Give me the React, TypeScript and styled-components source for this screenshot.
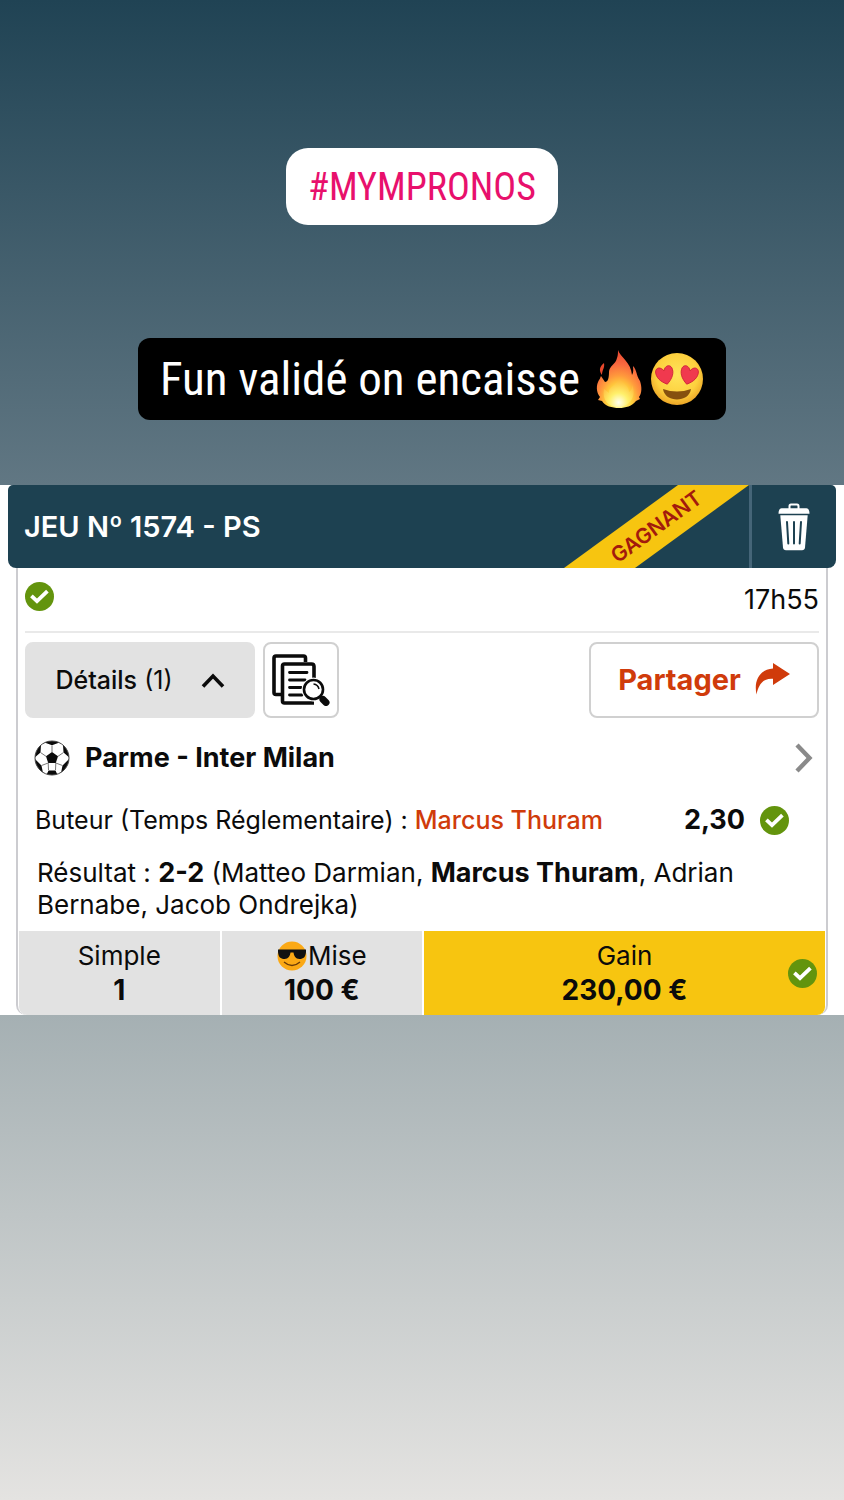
import React from "react";
import styled, { createGlobalStyle } from "styled-components";

const GlobalStyle = createGlobalStyle`
  * { box-sizing: border-box; }
  body { margin: 0; font-family: Inter, "Liberation Sans", sans-serif; color: #0b0b0b; }
  button { font: inherit; color: inherit; border: 0; padding: 0; background: none; cursor: pointer; }
  h1, h2, p, dl, dt, dd { margin: 0; font: inherit; }
  svg { display: block; flex: none; }
`;

const Story = styled.main`
  min-height: 100vh;
  background: linear-gradient(#204354, #617783 485px, #a5b0b3 1015px, #e4e3e1);
`;

const Stickers = styled.header`
  display: flex;
  flex-direction: column;
  align-items: center;
  padding: 148px 0 65px;
`;

const condensed = `"Roboto Condensed", "Liberation Sans Narrow", "DejaVu Sans Condensed", sans-serif`;

const Hashtag = styled.a`
  display: flex;
  align-items: center;
  height: 77px;
  padding: 0 22px;
  border-radius: 22px;
  background: #fff;
  color: #e8106c;
  font: 38px/48px ${condensed};
  text-decoration: none;
`;

const Caption = styled.p`
  display: flex;
  align-items: center;
  height: 82px;
  padding: 0 22px;
  border-radius: 12px;
  background: #000;
  color: #fff;
  && {
    margin: 113px 0 0 20px;
    font: 47px/60px ${condensed};
  }
`;

const Emojis = styled.span`
  display: flex;
  align-items: center;
  gap: 8px;
  margin-left: 16px;
`;

const Ticket = styled.article`
  background: #fff;
`;

const TicketHeader = styled.header`
  display: flex;
  align-items: center;
  height: 83px;
  margin: 0 8px;
  border-radius: 5px 5px 8px 8px;
  overflow: hidden;
  background: #1d4151;
  color: #fff;
`;

const TicketTitle = styled.h1`
  flex: 1;
  && { padding-left: 16px; font-size: 29px; line-height: 34px; font-weight: 600; }
`;

const Ribbon = styled.div`
  display: flex;
  align-items: center;
  justify-content: center;
  width: 185px;
  height: 83px;
  background: #f7c510;
  clip-path: polygon(114px 0, 100% 0, 71px 100%, 0 100%);
  color: #a31a0c;
  font-size: 21px;
  font-weight: 600;
`;

const RibbonText = styled.span`
  transform: rotate(-36deg);
`;

const DeleteButton = styled.button`
  display: flex;
  align-items: center;
  justify-content: center;
  width: 87px;
  height: 100%;
  && { border-left: 3px solid #456578; }
`;

const TicketBody = styled.div`
  margin: 0 16px;
  border: 2px solid #ccccd0;
  border-width: 0 2px;
  border-radius: 0 0 10px 10px;
  padding: 0 1px;
`;

const StatusRow = styled.div`
  display: flex;
  align-items: flex-start;
  justify-content: space-between;
  height: 65px;
  margin: 0 6px;
  padding-top: 14px;
  border-bottom: 2px solid #e9e9e9;
  font-size: 27px;
  line-height: 36px;
`;

const Actions = styled.div`
  display: flex;
  gap: 8px;
  padding: 9px 6px 0;
`;

const Action = styled.button<{ $wide?: boolean; $filled?: boolean; $accent?: boolean }>`
  display: flex;
  align-items: center;
  justify-content: center;
  gap: ${(p) => (p.$filled ? 28 : 14)}px;
  width: ${(p) => (p.$wide ? 230 : 76)}px;
  height: 76px;
  && {
    margin-left: ${(p) => (p.$accent ? "auto" : "0")};
    border: 2px solid ${(p) => (p.$filled ? "#e2e2e2" : "#d0d0d0")};
    border-radius: 8px;
    background: ${(p) => (p.$filled ? "#e2e2e2" : "#fff")};
    color: ${(p) => (p.$accent ? "#d03b0b" : "#0b0b0b")};
    font-size: ${(p) => (p.$accent ? 29 : 25)}px;
    line-height: 36px;
    font-weight: ${(p) => (p.$accent ? 700 : 400)};
  }
`;

const Strong = styled.strong<{ $weight?: number }>`
  font-weight: ${(p) => p.$weight ?? 700};
`;

const MatchRow = styled.button`
  display: flex;
  align-items: center;
  width: 100%;
  height: 80px;
  text-align: left;
  && { padding: 0 12px 0 15px; }
`;

const MatchName = styled.h2`
  flex: 1;
  && { padding-left: 15px; font-size: 27px; line-height: 32px; font-weight: 700; }
`;

const BetRow = styled.div`
  display: flex;
  align-items: center;
  height: 44px;
  padding: 0 36px 0 16px;
  font-size: 25px;
  line-height: 32px;
`;

const Player = styled.span`
  color: #d03b0b;
  font-weight: 500;
`;

const Odds = styled.strong`
  margin: 0 15px 0 auto;
  font-size: 27px;
  font-weight: 700;
`;

const Result = styled.p`
  && { padding: 15px 60px 10px 18px; font-size: 26px; line-height: 32px; }
  && strong { font-size: 27px; }
`;

const Totals = styled.dl`
  display: grid;
  grid-template-columns: 1fr 1fr 2fr;
  gap: 2px;
  border-radius: 0 0 8px 8px;
  overflow: hidden;
`;

const Total = styled.div<{ $win?: boolean }>`
  position: relative;
  height: 84px;
  padding-top: 8px;
  text-align: center;
  background: ${(p) => (p.$win ? "#f7c510" : "#e2e2e2")};
`;

const TotalLabel = styled.dt`
  display: flex;
  justify-content: center;
  align-items: center;
  gap: 1px;
  && { font-size: 26px; line-height: 34px; }
`;

const TotalValue = styled.dd`
  && { font-size: 28px; line-height: 34px; font-weight: 700; }
`;

const WinMark = styled.span`
  position: absolute;
  right: 8px;
  top: 28px;
`;

const Check = () => (
  <svg width="29" height="29" viewBox="0 0 29 29" role="img" aria-label="Gagné">
    <circle cx="14.5" cy="14.5" r="14.5" fill="#63940d" />
    <path d="M6.4 13.8 12 19.2 22.4 9.2" fill="none" stroke="#fff" strokeWidth="3.8" />
  </svg>
);

const Trash = () => (
  <svg width="32" height="48" viewBox="0 0 32 48" aria-hidden="true">
    <path d="M11.5 6V3.2Q11.5 1.5 13 1.5H19Q20.5 1.5 20.5 3.2V6" fill="none" stroke="#fff" strokeWidth="2" />
    <path d="M3.5 5.2H28.5Q31.5 5.5 31.5 10.8H.5Q.5 5.5 3.5 5.2Z" fill="#fff" />
    <path d="M2.3 12.3H29.7L27 44.5Q26.7 47.3 24 47.3H8Q5.3 47.3 5 44.5Z" fill="#fff" />
    <path d="M9 19 10.3 40.5M16 19V40.5M23 19 21.7 40.5" stroke="#1d4151" strokeWidth="2" strokeLinecap="round" />
  </svg>
);

const Documents = () => (
  <svg width="58" height="52" viewBox="0 0 58 52" fill="none" stroke="#0b0b0b" aria-hidden="true">
    <path d="M33.5 8V4Q33.5 2 31.5 2H4Q2 2 2 4V38.5Q2 40.5 4 40.5H9" strokeWidth="3.6" />
    <path d="M42 24V12.5Q42 10 39.5 10H12.5Q10.5 10 10.5 12V47Q10.5 49 12.5 49H42" strokeWidth="3.6" />
    <path d="M17.5 18.5H35M17.5 26H33M17.5 33.5H29M17.5 41H30" strokeWidth="2.8" strokeLinecap="round" />
    <circle cx="41.5" cy="35.5" r="11.5" fill="#fff" stroke="#fff" />
    <circle cx="41.5" cy="35.5" r="9.5" fill="#fff" strokeWidth="2.6" />
    <path d="M41.5 30Q46 30.5 47 35" strokeWidth="1.5" />
    <path d="M48.5 42.5 51 45" strokeWidth="2.6" />
    <path d="M51 45.5 54 48.5" strokeWidth="7" strokeLinecap="round" />
  </svg>
);

const ChevronUp = () => (
  <svg width="24" height="16" viewBox="0 0 24 16" aria-hidden="true">
    <path d="M2 14.5 12 4 22 14.5" fill="none" stroke="#0b0b0b" strokeWidth="3.6" />
  </svg>
);

const ChevronRight = () => (
  <svg width="18" height="30" viewBox="0 0 18 30" aria-hidden="true">
    <path d="M2 2 14.5 15 2 28" fill="none" stroke="#8a8a8a" strokeWidth="4.4" />
  </svg>
);

const ShareArrow = () => (
  <svg width="35" height="34" viewBox="0 0 35 34" aria-hidden="true">
    <path d="M18 0 35 11 18 22V15.8C9 15 4 20 1.5 31.5C-1.5 17 5 6.500 18 5.500Z" fill="#d03b0b" />
  </svg>
);

const Ball = () => (
  <svg width="36" height="36" viewBox="0 0 36 36" aria-hidden="true">
    <defs>
      <clipPath id="ball"><circle cx="18" cy="18" r="17" /></clipPath>
    </defs>
    <circle cx="18" cy="18" r="17" fill="#fff" />
    <g clipPath="url(#ball)">
      <path d="M18 12 24 16.3 21.8 23H14.2L12 16.3Z" fill="#0b0b0b" />
      <path d="M10.500 2.5 18 5.2 25.5 2.5 22-2H14ZM29 5 29.5 12.5 36 18 40 8ZM35 19 28.5 25.5 27 33 38 32ZM24 36 21.5 30.5H14.5L12 36 18 40ZM9 33 7.5 25.5 1 19-3 32ZM0 18 6.5 12.5 7 5-4 8Z" fill="#0b0b0b" />
      <path d="M18 12V5.5M24 16.3 29.5 12.5M21.8 23 28.5 25.5M21.8 23 21.5 30M14.2 23 14.5 30M14.2 23 7.5 25.5M12 16.3 6.5 12.5" stroke="#777" strokeWidth="1" fill="none" />
    </g>
    <circle cx="18" cy="18" r="17" fill="none" stroke="#444" strokeWidth="1" />
  </svg>
);

const Flame = () => (
  <svg width="46" height="58" viewBox="0 0 46 58" role="img" aria-label="feu">
    <defs>
      <radialGradient id="flame" cx=".5" cy=".88" r=".88">
        <stop offset="0" stopColor="#fffde0" />
        <stop offset=".16" stopColor="#fff27a" />
        <stop offset=".32" stopColor="#ffd23c" />
        <stop offset=".5" stopColor="#ff9a3c" />
        <stop offset=".72" stopColor="#f9693f" />
        <stop offset="1" stopColor="#e8452f" />
      </radialGradient>
      <radialGradient id="core" cx=".5" cy=".85" r=".8">
        <stop offset="0" stopColor="#fffff0" />
        <stop offset=".4" stopColor="#fff06a" />
        <stop offset="1" stopColor="#ffb03a" stopOpacity=".5" />
      </radialGradient>
    </defs>
    <path d="M22 0C24 7 35 12 36 25C38 22 37 19 37 16C41 20 40 25 44 31C46 37 46 43 43 47L44 49L40 51C36 56 30 58 23 58C16 58 9 56 6 51L2 50L4 47C0 42 0 35 3 30C4 29 4 28 5 26L9 32C12 32 13 28 13 22C13 16 20 14 21 8C22 5 22 3 22 0Z" fill="url(#flame)" />
    <path d="M8 13C3 17 3 21 6 25C6 20 9 18 8 13Z" fill="#e8482c" />
    <path d="M23 27C25 33 33 35 33 42C36 40 36 38 36 35C41 46 34 56 23 57C12 57 6 50 8 39L13 43C12 36 23 35 23 27Z" fill="url(#core)" />
  </svg>
);

const HeartEyes = () => (
  <svg width="54" height="54" viewBox="0 0 54 54" role="img" aria-label="yeux en cœur">
    <defs>
      <radialGradient id="face" cx=".5" cy=".42" r=".62">
        <stop offset="0" stopColor="#ffe45a" />
        <stop offset=".65" stopColor="#fdd03e" />
        <stop offset="1" stopColor="#e99d22" />
      </radialGradient>
      <path id="heart" d="M0 9C-6 5-9 0-8-5C-7-9-2-9 0-4C2-9 7-9 8-5C9 0 6 5 0 9Z" />
    </defs>
    <circle cx="27" cy="27" r="26" fill="url(#face)" />
    <g fill="#f0394e" stroke="#cf2038" strokeWidth=".8">
      <use href="#heart" transform="translate(15 23) rotate(-14) scale(1.05)" />
      <use href="#heart" transform="translate(39 23) rotate(14) scale(1.05)" />
    </g>
    <path d="M13 37Q27 42 41 37C39 51 15 51 13 37Z" fill="#85500f" />
  </svg>
);

const Sunglasses = () => (
  <svg width="30" height="30" viewBox="0 0 30 30" aria-hidden="true">
    <circle cx="15" cy="15" r="14.5" fill="#fba915" />
    <path d="M1 8.5H29V11C28.5 16 26.5 18 22.5 18C18.5 18 17 15 16.5 11.5H13.5C13 15 11.5 18 7.5 18C3.5 18 1.5 16 1 11Z" fill="#111" />
    <path d="M7 21Q15 28 23 21" fill="none" stroke="#6b3c08" strokeWidth="1.3" />
  </svg>
);

export default function App() {
  return (
    <Story>
      <GlobalStyle />
      <Stickers>
        <Hashtag href="#mympronos">#MYMPRONOS</Hashtag>
        <Caption>
          Fun validé on encaisse
          <Emojis>
            <Flame />
            <HeartEyes />
          </Emojis>
        </Caption>
      </Stickers>
      <Ticket>
        <TicketHeader>
          <TicketTitle>JEU Nº 1574 - PS</TicketTitle>
          <Ribbon>
            <RibbonText>GAGNANT</RibbonText>
          </Ribbon>
          <DeleteButton aria-label="Supprimer">
            <Trash />
          </DeleteButton>
        </TicketHeader>
        <TicketBody>
          <StatusRow>
            <Check />
            <time dateTime="17:55">17h55</time>
          </StatusRow>
          <Actions>
            <Action $wide $filled aria-expanded="true">
              <span>
                <Strong $weight={500}>Détails</Strong> (1)
              </span>
              <ChevronUp />
            </Action>
            <Action aria-label="Voir le ticket">
              <Documents />
            </Action>
            <Action $wide $accent>
              Partager
              <ShareArrow />
            </Action>
          </Actions>
          <MatchRow>
            <Ball />
            <MatchName>Parme - Inter Milan</MatchName>
            <ChevronRight />
          </MatchRow>
          <BetRow>
            <span>
              Buteur (Temps Réglementaire) : <Player>Marcus Thuram</Player>
            </span>
            <Odds>2,30</Odds>
            <Check />
          </BetRow>
          <Result>
            Résultat : <Strong>2-2</Strong> (Matteo Darmian, <Strong>Marcus Thuram</Strong>, Adrian Bernabe, Jacob
            Ondrejka)
          </Result>
          <Totals>
            <Total>
              <TotalLabel>Simple</TotalLabel>
              <TotalValue>1</TotalValue>
            </Total>
            <Total>
              <TotalLabel>
                <Sunglasses />
                Mise
              </TotalLabel>
              <TotalValue>100 €</TotalValue>
            </Total>
            <Total $win>
              <TotalLabel>Gain</TotalLabel>
              <TotalValue>230,00 €</TotalValue>
              <WinMark>
                <Check />
              </WinMark>
            </Total>
          </Totals>
        </TicketBody>
      </Ticket>
    </Story>
  );
}
